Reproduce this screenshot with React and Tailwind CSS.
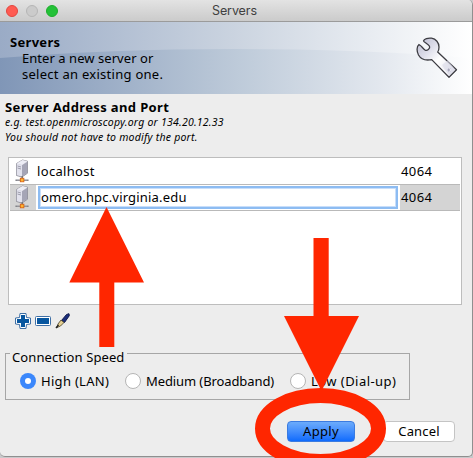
import React from "react";

function ServerIcon() {
  return (
    <svg width="16" height="24" viewBox="0 0 16 24" className="block shrink-0">
      <path d="M1.500 4.500 7.500 1l5 1.200v12L7 18l-5.500-1.500z" fill="#c9c9d6" stroke="#85858f" strokeWidth=".8" />
      <path d="M1.500 4.500 7.500 1l5 1.200L7 6z" fill="#ededf5" />
      <path d="M1.800 4.800 7 6.200V17.500l-5.200-1.500z" fill="#e2e2ed" />
      <path d="M7 6.200 12.200 3v11L7 17.500z" fill="#a5a5b6" />
      <path d="M2.500 7l3.500 1M2.500 9l3.500 1" stroke="#8b8b9b" strokeWidth=".8" />
      <path d="M7.200 17v3M.5 21.200h13" stroke="#77777c" strokeWidth="1.600" />
      <path d="M1.500 21h11" stroke="#d6d6db" strokeWidth=".6" />
      <rect x="5.300" y="19.200" width="3.600" height="3.600" fill="#ffb52e" stroke="#d65c13" strokeWidth=".8" />
    </svg>
  );
}

function WrenchIcon() {
  return (
    <svg width="42" height="42" viewBox="0 0 42 42" className="block">
      <defs>
        <linearGradient id="steel" x1="0" y1="0" x2="1" y2="1">
          <stop offset="0" stopColor="#b9b9cc" />
          <stop offset=".3" stopColor="#dcdce9" />
          <stop offset=".55" stopColor="#fff" />
          <stop offset="1" stopColor="#d8d8e6" />
        </linearGradient>
      </defs>
      <path
        d="M7.500 4C8 1.800 12 .8 15.500 1.200c4.500.6 7.500 4.500 7.500 8.800 0 2-.4 3.700-1.300 5L40.500 32.800l-7.500 7.400L15.700 22.600C10.500 23.600 5 22.500 2.500 18 .7 14.500.3 9.500 3 7.500c1.800.6 3.500 3.500 6 5.500 2 1.400 5.500-1.500 4.500-3.700C12.500 7 8.500 5.500 7.500 4z"
        fill="url(#steel)"
        stroke="#3d3d43"
        strokeWidth="1.300"
        strokeLinejoin="round"
      />
      <path d="M17 22 33 38.300" stroke="#fff" strokeWidth="1" />
      <path d="m26 28 6-5 7 9.500-6 6z" fill="#dadae8" opacity=".6" />
      <circle cx="33.300" cy="33" r="1.800" fill="#a8a8bd" />
      <path d="M33.500 31.500a1.700 1.700 0 0 1 0 3" stroke="#fff" fill="none" />
    </svg>
  );
}

function Radio({ checked }) {
  return checked ? (
    <span className="flex size-4 shrink-0 items-center justify-center rounded-full bg-[#3b87fb]">
      <span className="size-[6px] rounded-full bg-white" />
    </span>
  ) : (
    <span className="size-4 shrink-0 rounded-full border border-[#b5b5b5] bg-white" />
  );
}

export default function App() {
  return (
    <div className="relative h-[458px] w-[473px] overflow-hidden bg-[#c9c9cb] font-['Noto_Sans','Open_Sans',sans-serif] text-[13px] leading-4 text-black">
      <div className="flex h-[457px] w-[473px] flex-col overflow-hidden rounded-b-[5px] rounded-tr-[5px] border-r border-b border-[#8f8f8f] bg-[#ededed]">
        <div className="flex h-[22px] shrink-0 items-center border-b border-[#9b9b9b] bg-linear-to-b from-[#e3e3e3] to-[#cbcbcb] pl-[6px]">
          <span className="size-3 rounded-full border border-[#e2463f] bg-[#ff5b52]" />
          <span className="ml-2 size-3 rounded-full border border-[#b5b5b5] bg-[#cbcbcb]" />
          <span className="ml-2 size-3 rounded-full border border-[#1dad2b] bg-[#24c138]" />
          <span className="ml-[154px] font-['Inter',sans-serif] text-[12.500px] tracking-[-0.1px] text-[#404040]">Servers</span>
        </div>

        <div className="relative flex h-[72px] shrink-0 justify-between bg-linear-to-r from-[#9aabc6] via-[#cbd4e0] to-white">
          <svg className="absolute inset-0" width="472" height="72" viewBox="0 0 472 72">
            <defs>
              <linearGradient id="swoosh">
                <stop offset="0" stopColor="#8096b7" />
                <stop offset=".5" stopColor="#bdcad9" />
                <stop offset=".8" stopColor="#e2e7ee" />
                <stop offset="1" stopColor="#fff" />
              </linearGradient>
            </defs>
            <path d="M0 36Q110 27 235 27T472 36V72H0z" fill="url(#swoosh)" />
          </svg>
          <div className="relative pt-3 pl-[10px] whitespace-nowrap">
            <div className="font-bold tracking-[0.3px]">Servers</div>
            <div className="pl-3 tracking-[0.050px]">Enter a new server or</div>
            <div className="pl-3 tracking-[0.270px]">select an existing one.</div>
          </div>
          <div className="relative pt-[15px] pr-[14px]">
            <WrenchIcon />
          </div>
        </div>

        <div className="h-[63px] shrink-0 pt-[5px] pl-[5px] whitespace-nowrap">
          <div className="font-bold tracking-[0.370px]">Server Address and Port</div>
          <div className="text-[10.500px] leading-[15px] tracking-[0.230px] italic">e.g. test.openmicroscopy.org or 134.20.12.33</div>
          <div className="text-[10.500px] leading-[15px] tracking-[0.230px] italic">You should not have to modify the port.</div>
        </div>

        <div className="ml-2 h-[148px] w-[454px] shrink-0 border border-[#bdbdbd] bg-white px-px">
          <div className="flex h-[27px] border-b border-[#b9b9b9]">
            <div className="w-[27px] pt-px pl-[5px]"><ServerIcon /></div>
            <div className="w-[364px] pt-[5px] tracking-[0.330px]">localhost</div>
            <div className="pt-[5px] tracking-[0.400px]">4064</div>
          </div>
          <div className="flex h-[26px] border-b border-[#b9b9b9] bg-[#d4d4d4]">
            <div className="w-[26px] pl-[5px]"><ServerIcon /></div>
            <div className="w-[364px] bg-white px-[2px] py-px">
              <div className="h-[23px] border-2 border-[#8dbcf2] pt-px pl-px tracking-[0.180px] whitespace-nowrap outline-1 -outline-offset-3 outline-[#c8defa]">omero.hpc.virginia.edu</div>
            </div>
            <div className="pt-[4px] pl-px tracking-[0.400px]">4064</div>
          </div>
        </div>

        <div className="flex h-[43px] shrink-0 gap-1 pt-2 pl-[15px]">
          <svg width="16" height="16" viewBox="0 0 16 16">
            <path d="M5 .5h6L11.500 4.500 15.500 5v6l-4 .5-.5 4H5l-.5-4-4-.5V5l4-.5z" fill="#fff" stroke="#3f6fa5" strokeLinejoin="round" />
            <path d="M6 2h4v4h4v4h-4v4H6v-4H2V6h4z" fill="#07569f" />
          </svg>
          <svg width="16" height="16" viewBox="0 0 16 16">
            <rect x=".5" y="3.500" width="15" height="9" rx="1" fill="#fff" stroke="#3f6fa5" />
            <path d="M2 5h12v6H2z" fill="#07569f" />
          </svg>
          <svg width="16" height="16" viewBox="0 0 16 16">
            <path d="m6.500 7.500 5-6L14 .7l.3 2L9.500 9.500z" fill="#1b2e7c" stroke="#101c4d" />
            <path d="m6 7 3 2.500L5.500 13 2 14.500 3 11z" fill="#e5cf91" stroke="#453c24" strokeWidth=".8" />
            <path d="m1 15 2.500-3" stroke="#222" strokeWidth="1.400" />
          </svg>
        </div>

        <div className="ml-[5px] flex h-[56px] w-[405px] shrink-0 flex-col">
          <div className="flex h-4 items-start">
            <span className="mt-[5px] h-[11px] w-[5px] border-t border-l border-[#a6a6a6]" />
            <span className="w-[117px] pt-px pl-[2px] tracking-[0.100px] whitespace-nowrap">Connection Speed</span>
            <span className="mt-[5px] h-[11px] flex-1 border-t border-r border-[#a6a6a6]" />
          </div>
          <div className="flex h-[36px] items-start border-x border-b border-[#a6a6a6] pt-[9px] pl-[14px] whitespace-nowrap">
            <div className="flex w-[105px] gap-[5px] tracking-[0.300px]"><Radio checked /><span>High (LAN)</span></div>
            <div className="flex w-[165px] gap-[5px] tracking-[-0.100px]"><Radio /><span>Medium (Broadband)</span></div>
            <div className="flex gap-[5px] tracking-[0.450px]"><Radio /><span>Low (Dial-up)</span></div>
          </div>
        </div>

        <div className="flex justify-end gap-[28px] pt-[17px] pr-[17px]">
          <div className="h-[21px] w-[68px] rounded-[4px] border border-[#3b7be0] bg-linear-to-b from-[#6cabfb] to-[#0d6bfd] pt-px text-center tracking-[0.300px]">Apply</div>
          <div className="h-[21px] w-[72px] rounded-[4px] border border-[#c4c4c4] bg-white pt-px text-center tracking-[0.150px]">Cancel</div>
        </div>
      </div>

      <svg className="absolute inset-0" width="473" height="458" viewBox="0 0 473 458">
        <g fill="#ff2600">
          <path d="M106.500 207 144 282.500H114.300V347H99.300V282.500H69.300z" />
          <path d="M313.500 238h15.200v78H359l-37.500 75L284 316h29.500z" />
        </g>
        <ellipse cx="320.500" cy="428.500" rx="58" ry="33" fill="none" stroke="#ff2600" strokeWidth="15" />
      </svg>
    </div>
  );
}
